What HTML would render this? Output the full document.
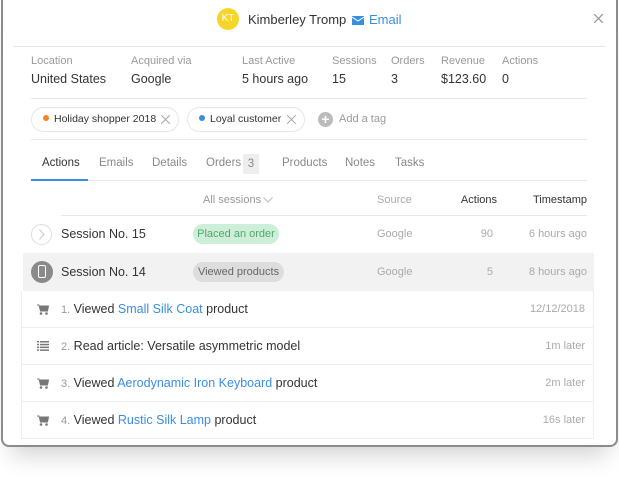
<!DOCTYPE html>
<html><head><style>
*{margin:0;padding:0;box-sizing:border-box}
body{width:619px;height:481px;background:#fff;font-family:"Liberation Sans",sans-serif;position:relative;overflow:hidden}
.win{position:absolute;left:1px;top:0;width:617px;height:447px;border:2px solid #8c8c8c;border-top:none;border-radius:0 0 8px 8px;background:#fff;box-shadow:0 18px 22px -10px rgba(0,0,0,.18)}
.a{position:absolute;white-space:nowrap}
.hl{position:absolute;height:1px;background:#e8e8e8}
.lab{font-size:11px;color:#999}
.val{font-size:12.5px;color:#333}
.pill{position:absolute;white-space:nowrap;border:1px solid #e6e6e6;border-radius:13px;height:25px;font-size:10.5px;color:#333;line-height:23px}
.pill svg{position:absolute;right:8px;top:7px;display:block}
.dot{display:inline-block;width:6px;height:6px;border-radius:3px;margin:0 5px 1px 11px}
.tab{font-size:11.5px;color:#888;top:157px}
.row{position:absolute;left:21px;width:573px;height:37px;border:1px solid #eee;border-top:none;background:#fff}
.rt{font-size:12.5px;color:#333;top:11px;left:39px}
.rt i{font-style:normal;color:#999;font-size:11px}
.rt b{font-weight:normal;color:#3a8ee0}
.ts{font-size:11px;color:#aaa;right:8px;top:12px}
.g{font-size:11px;color:#aaa}
</style></head><body>
<div class="win"></div>
<div class="a" style="left:217px;top:8px;width:22px;height:22px;border-radius:11px;background:#f6d52a;color:#fff;font-size:10px;text-align:center;line-height:22px">KT</div>
<div class="a" style="left:248px;top:12px;font-size:13px;color:#333">Kimberley Tromp</div>
<svg class="a" style="left:352px;top:16px" width="12" height="9"><rect width="12" height="9" fill="#3a8ee0"/><path d="M0 1 L6 5 L12 1" stroke="#fff" fill="none"/></svg>
<div class="a" style="left:369px;top:12px;font-size:13px;color:#3a8ee0">Email</div>
<svg class="a" style="left:594px;top:14px" width="9" height="9"><path d="M0 0L9 9M9 0L0 9" stroke="#999" stroke-width="1.3"/></svg>
<div class="hl" style="left:13px;top:46px;width:592px"></div>

<div class="a lab" style="left:31px;top:55px">Location</div><div class="a val" style="left:31px;top:72px">United States</div>
<div class="a lab" style="left:131px;top:55px">Acquired via</div><div class="a val" style="left:131px;top:72px">Google</div>
<div class="a lab" style="left:242px;top:55px">Last Active</div><div class="a val" style="left:242px;top:72px">5 hours ago</div>
<div class="a lab" style="left:332px;top:55px">Sessions</div><div class="a val" style="left:332px;top:72px">15</div>
<div class="a lab" style="left:391px;top:55px">Orders</div><div class="a val" style="left:391px;top:72px">3</div>
<div class="a lab" style="left:441px;top:55px">Revenue</div><div class="a val" style="left:441px;top:72px">$123.60</div>
<div class="a lab" style="left:502px;top:55px">Actions</div><div class="a val" style="left:502px;top:72px">0</div>
<div class="hl" style="left:31px;top:98px;width:556px"></div>

<div class="pill" style="left:31px;top:107px;width:148px"><span class="dot" style="background:#f5841f"></span>Holiday shopper 2018<svg width="9" height="9"><path d="M0 0L9 9M9 0L0 9" stroke="#aaa"/></svg></div>
<div class="pill" style="left:187px;top:107px;width:118px"><span class="dot" style="background:#3a8ee0"></span>Loyal customer<svg width="9" height="9"><path d="M0 0L9 9M9 0L0 9" stroke="#aaa"/></svg></div>
<div class="a" style="left:318px;top:112px;width:15px;height:15px;border-radius:8px;background:#bbb;color:#fff;font-size:14px;line-height:14px;text-align:center;font-weight:bold">+</div>
<div class="a" style="left:339px;top:113px;font-size:11px;color:#999">Add a tag</div>
<div class="hl" style="left:31px;top:139px;width:556px"></div>

<div class="a tab" style="left:42px;top:157px;color:#333">Actions</div>
<div class="a tab" style="left:99px">Emails</div>
<div class="a tab" style="left:152px">Details</div>
<div class="a tab" style="left:206px">Orders</div>
<div class="a" style="left:243px;top:154px;width:16px;height:20px;background:#eee;color:#888;font-size:11.5px;text-align:center;line-height:20px">3</div>
<div class="a tab" style="left:282px">Products</div>
<div class="a tab" style="left:345px">Notes</div>
<div class="a tab" style="left:395px">Tasks</div>
<div class="hl" style="left:31px;top:180px;width:556px"></div>
<div class="a" style="left:31px;top:179px;width:57px;height:2px;background:#3a8ee0"></div>

<div class="a" style="left:203px;top:194px;font-size:11px;color:#999">All sessions</div>
<svg class="a" style="left:263px;top:197px" width="10" height="6"><path d="M0.5 0.5L5 5L9.5 0.5" stroke="#bbb" fill="none"/></svg>
<div class="a g" style="left:377px;top:194px">Source</div>
<div class="a" style="right:122px;top:194px;font-size:11px;color:#333">Actions</div>
<div class="a" style="right:32px;top:194px;font-size:11px;color:#333">Timestamp</div>
<div class="hl" style="left:61px;top:215px;width:526px"></div>

<div class="a" style="left:31px;top:224px;width:21px;height:21px;border-radius:11px;border:1px solid #ddd"></div>
<svg class="a" style="left:39px;top:229px" width="6" height="11"><path d="M0.5 0.5L5 5.5L0.5 10.5" stroke="#ccc" fill="none"/></svg>
<div class="a" style="left:61px;top:227px;font-size:12.5px;color:#333">Session No. 15</div>
<div class="a" style="left:193px;top:224px;width:86px;height:20px;border-radius:10px;background:#cdefd7;color:#4ea86c;font-size:11px;text-align:center;line-height:20px">Placed an order</div>
<div class="a g" style="left:377px;top:228px">Google</div>
<div class="a g" style="right:126px;top:228px">90</div>
<div class="a g" style="right:32px;top:228px">6 hours ago</div>

<div class="a" style="left:23px;top:253px;width:571px;height:38px;background:#f2f2f2"></div>
<div class="a" style="left:31px;top:261px;width:22px;height:22px;border-radius:11px;background:#8a8a8a"></div>
<div class="a" style="left:38px;top:265px;width:8px;height:13px;border:1.5px solid #fff;border-radius:2px"></div>
<div class="a" style="left:61px;top:265px;font-size:12.5px;color:#333">Session No. 14</div>
<div class="a" style="left:193px;top:262px;width:91px;height:20px;border-radius:10px;background:#ddd;color:#666;font-size:11px;text-align:center;line-height:20px">Viewed products</div>
<div class="a g" style="left:377px;top:266px">Google</div>
<div class="a g" style="right:126px;top:266px">5</div>
<div class="a g" style="right:32px;top:266px">8 hours ago</div>

<div class="row" style="top:291px">
<svg class="a" style="left:15px;top:13px" width="12" height="11"><path d="M0 1h2l1.5 6h7l1-5H3" fill="#777" stroke="#777"/><circle cx="4" cy="9.5" r="1.3" fill="#777"/><circle cx="9.5" cy="9.5" r="1.3" fill="#777"/></svg>
<div class="a rt"><i>1.</i> Viewed <b>Small Silk Coat</b> product</div><div class="a ts">12/12/2018</div></div>
<div class="row" style="top:328px">
<svg class="a" style="left:15px;top:13px" width="12" height="10" fill="#777"><rect y="0" width="2" height="1.5"/><rect x="3" y="0" width="9" height="1.5"/><rect y="2.8" width="2" height="1.5"/><rect x="3" y="2.8" width="9" height="1.5"/><rect y="5.6" width="2" height="1.5"/><rect x="3" y="5.6" width="9" height="1.5"/><rect y="8.4" width="2" height="1.5"/><rect x="3" y="8.4" width="9" height="1.5"/></svg>
<div class="a rt"><i>2.</i> Read article: Versatile asymmetric model</div><div class="a ts">1m later</div></div>
<div class="row" style="top:365px">
<svg class="a" style="left:15px;top:13px" width="12" height="11"><path d="M0 1h2l1.5 6h7l1-5H3" fill="#777" stroke="#777"/><circle cx="4" cy="9.5" r="1.3" fill="#777"/><circle cx="9.5" cy="9.5" r="1.3" fill="#777"/></svg>
<div class="a rt"><i>3.</i> Viewed <b>Aerodynamic Iron Keyboard</b> product</div><div class="a ts">2m later</div></div>
<div class="row" style="top:402px">
<svg class="a" style="left:15px;top:13px" width="12" height="11"><path d="M0 1h2l1.5 6h7l1-5H3" fill="#777" stroke="#777"/><circle cx="4" cy="9.5" r="1.3" fill="#777"/><circle cx="9.5" cy="9.5" r="1.3" fill="#777"/></svg>
<div class="a rt"><i>4.</i> Viewed <b>Rustic Silk Lamp</b> product</div><div class="a ts">16s later</div></div>
</body></html>
